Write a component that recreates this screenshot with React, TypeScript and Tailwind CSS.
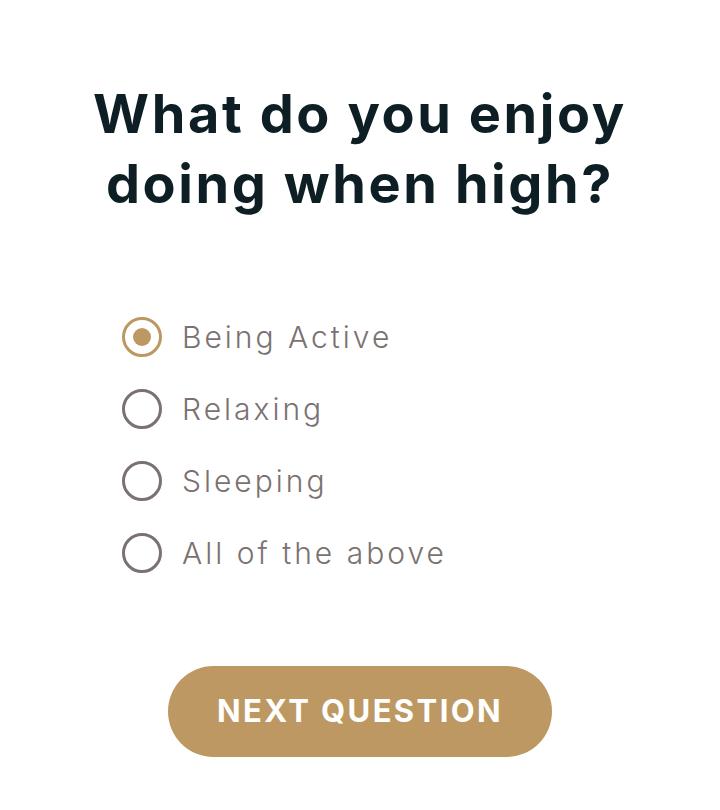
import React, { useState } from "react";

const options = ["Being Active", "Relaxing", "Sleeping", "All of the above"];

export default function App() {
  const [sel, setSel] = useState(0);
  return (
    <div className="w-[720px] h-[810px] bg-white flex flex-col items-center" style={{ fontFamily: "Inter, 'Noto Sans', sans-serif" }}>
      <h1 className="mt-[79px] text-center text-[54px] leading-[70px] font-bold text-[#0d1f24] tracking-[2.6px]">
        What do you enjoy
        <br />
        doing when high?
      </h1>
      <div className="mt-[98px] w-full pl-[122px] flex flex-col gap-[32px]">
        {options.map((o, i) => (
          <button key={o} onClick={() => setSel(i)} className="flex items-center gap-[20px] h-[40px] text-left">
            {sel === i ? (
              <span className="w-[40px] h-[40px] rounded-full border-[3px] border-[#bd9863] flex items-center justify-center shrink-0">
                <span className="w-[18px] h-[18px] rounded-full bg-[#bd9863]" />
              </span>
            ) : (
              <span className="w-[40px] h-[40px] rounded-full border-[3px] border-[#7a7170] shrink-0" />
            )}
            <span className="text-[30px] text-[#7a7170] tracking-[3px] font-light">{o}</span>
          </button>
        ))}
      </div>
      <button className="mt-[93px] w-[384px] h-[91px] rounded-full bg-[#bd9863] text-white text-[31px] font-bold tracking-[2.4px]">
        NEXT QUESTION
      </button>
    </div>
  );
}
